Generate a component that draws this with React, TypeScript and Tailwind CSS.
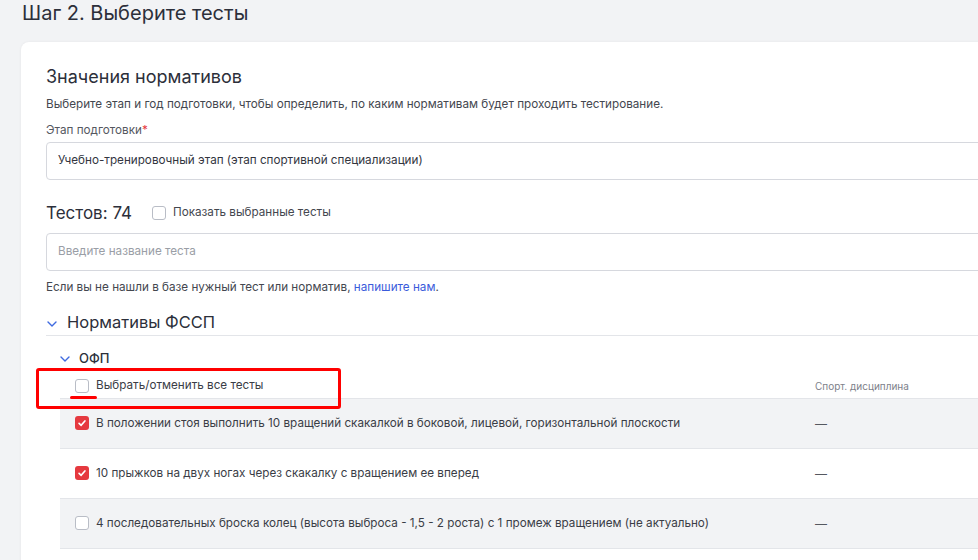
import React from 'react'

const font = { fontFamily: 'Inter, "Noto Sans", sans-serif' }

type Test = { name: string; checked: boolean; discipline: string }

const tests: Test[] = [
  { name: 'В положении стоя выполнить 10 вращений скакалкой в боковой, лицевой, горизонтальной плоскости', checked: true, discipline: '—' },
  { name: '10 прыжков на двух ногах через скакалку с вращением ее вперед', checked: true, discipline: '—' },
  { name: '4 последовательных броска колец (высота выброса - 1,5 - 2 роста) с 1 промеж вращением (не актуально)', checked: false, discipline: '—' },
]

function Checkbox({ checked }: { checked: boolean }) {
  if (checked) {
    return (
      <span className="flex h-[14px] w-[14px] shrink-0 items-center justify-center rounded-[3px] bg-[#e5393f]">
        <svg viewBox="0 0 12 12" className="h-[10px] w-[10px]" fill="none" stroke="white" strokeWidth="2" strokeLinecap="round" strokeLinejoin="round">
          <polyline points="2.5,6.5 5,8.8 9.5,3.5" />
        </svg>
      </span>
    )
  }
  return <span className="h-[14px] w-[14px] shrink-0 rounded-[3px] border border-[#b9bdc6] bg-white" />
}

function Chevron() {
  return (
    <svg viewBox="0 0 10 6" className="h-[6px] w-[10px]" fill="none" stroke="#3f6ae0" strokeWidth="1.4" strokeLinecap="round" strokeLinejoin="round">
      <polyline points="1,1 5,5 9,1" />
    </svg>
  )
}

export default function App() {
  return (
    <div className="h-[560px] w-[978px] overflow-hidden bg-[#f2f3f5] text-[#33363f]" style={font}>
      <h1 className="pl-[22px] text-[20px] leading-[26px] text-[#2c2f3a]">Шаг 2. Выберите тесты</h1>

      <div className="ml-[21px] mt-[16px] w-[1100px] rounded-lg bg-white pb-10 pl-[25px] pr-[100px] pt-[23px] shadow-[0_0_3px_rgba(0,0,0,0.06)]">
        <h2 className="text-[18px] leading-[24px] text-[#2c2f3a]">Значения нормативов</h2>
        <p className="mt-[6px] text-[11.7px] leading-[18px] text-[#44474f]">
          Выберите этап и год подготовки, чтобы определить, по каким нормативам будет проходить тестирование.
        </p>

        <div className="mt-[8px] text-[11.7px] leading-[18px] text-[#55585f]">
          Этап подготовки<span className="text-[#e5393f]">*</span>
        </div>
        <div className="mt-[3px] flex h-[38px] items-center rounded-[4px] border border-[#d6d8de] px-[11px] text-[11.7px] text-[#33363f]">
          Учебно-тренировочный этап (этап спортивной специализации)
        </div>

        <div className="mt-[21px] flex items-center">
          <span className="text-[17px] leading-[24px] text-[#2c2f3a]">Тестов: 74</span>
          <label className="ml-[20px] flex items-center gap-[7px] text-[11.7px] text-[#44474f]">
            <Checkbox checked={false} />
            Показать выбранные тесты
          </label>
        </div>

        <div className="mt-[8px] flex h-[38px] items-center rounded-[4px] border border-[#d6d8de] px-[11px] text-[11.7px] text-[#9a9ea6]">
          Введите название теста
        </div>

        <p className="mt-[7px] text-[11.7px] leading-[18px] text-[#44474f]">
          Если вы не нашли в базе нужный тест или норматив, <span className="text-[#3b5bdb]">напишите нам</span>.
        </p>

        <div className="mt-[14px] flex items-center gap-[10px] border-b border-[#e3e5e9] pb-[1px]">
          <span className="pl-[1px] pt-[4px]"><Chevron /></span>
          <span className="text-[16.5px] leading-[24px] text-[#2c2f3a]">Нормативы ФССП</span>
        </div>

        <div className="mt-[12px] flex items-center gap-[9px] pl-[14px]">
          <span className="pt-[2px]"><Chevron /></span>
          <span className="text-[13px] font-medium leading-[20px] text-[#2c2f3a]">ОФП</span>
        </div>

        <div className="ml-[14px] mt-[6px]">
          <div className="relative flex h-[24px] items-center">
            <div className="absolute left-[-24px] top-[-6px] h-[41px] w-[305px] rounded-[3px] border-[3px] border-[#ff0000]" />
            <div className="absolute left-[10px] top-[22px] h-[3px] w-[27px] rounded-full bg-[#ff0000]" />
            <div className="flex w-[755px] items-center gap-[7px] pl-[15px] text-[11.7px] text-[#3a3d46]">
              <Checkbox checked={false} />
              Выбрать/отменить все тесты
            </div>
            <div className="text-[10px] text-[#7d818a]">Спорт. дисциплина</div>
          </div>
          <div className="border-t border-[#e3e5e9]">
            {tests.map((t, i) => (
              <div
                key={i}
                className={`flex h-[50px] items-center border-b border-[#e3e5e9] ${i % 2 === 0 ? 'bg-[#f2f3f5]' : 'bg-white'}`}
              >
                <div className="flex w-[755px] items-center gap-[7px] pl-[15px] text-[11.7px] text-[#3a3d46]">
                  <Checkbox checked={t.checked} />
                  <span className="whitespace-nowrap">{t.name}</span>
                </div>
                <div className="text-[12px] text-[#55585f]">{t.discipline}</div>
              </div>
            ))}
          </div>
        </div>
      </div>
    </div>
  )
}
